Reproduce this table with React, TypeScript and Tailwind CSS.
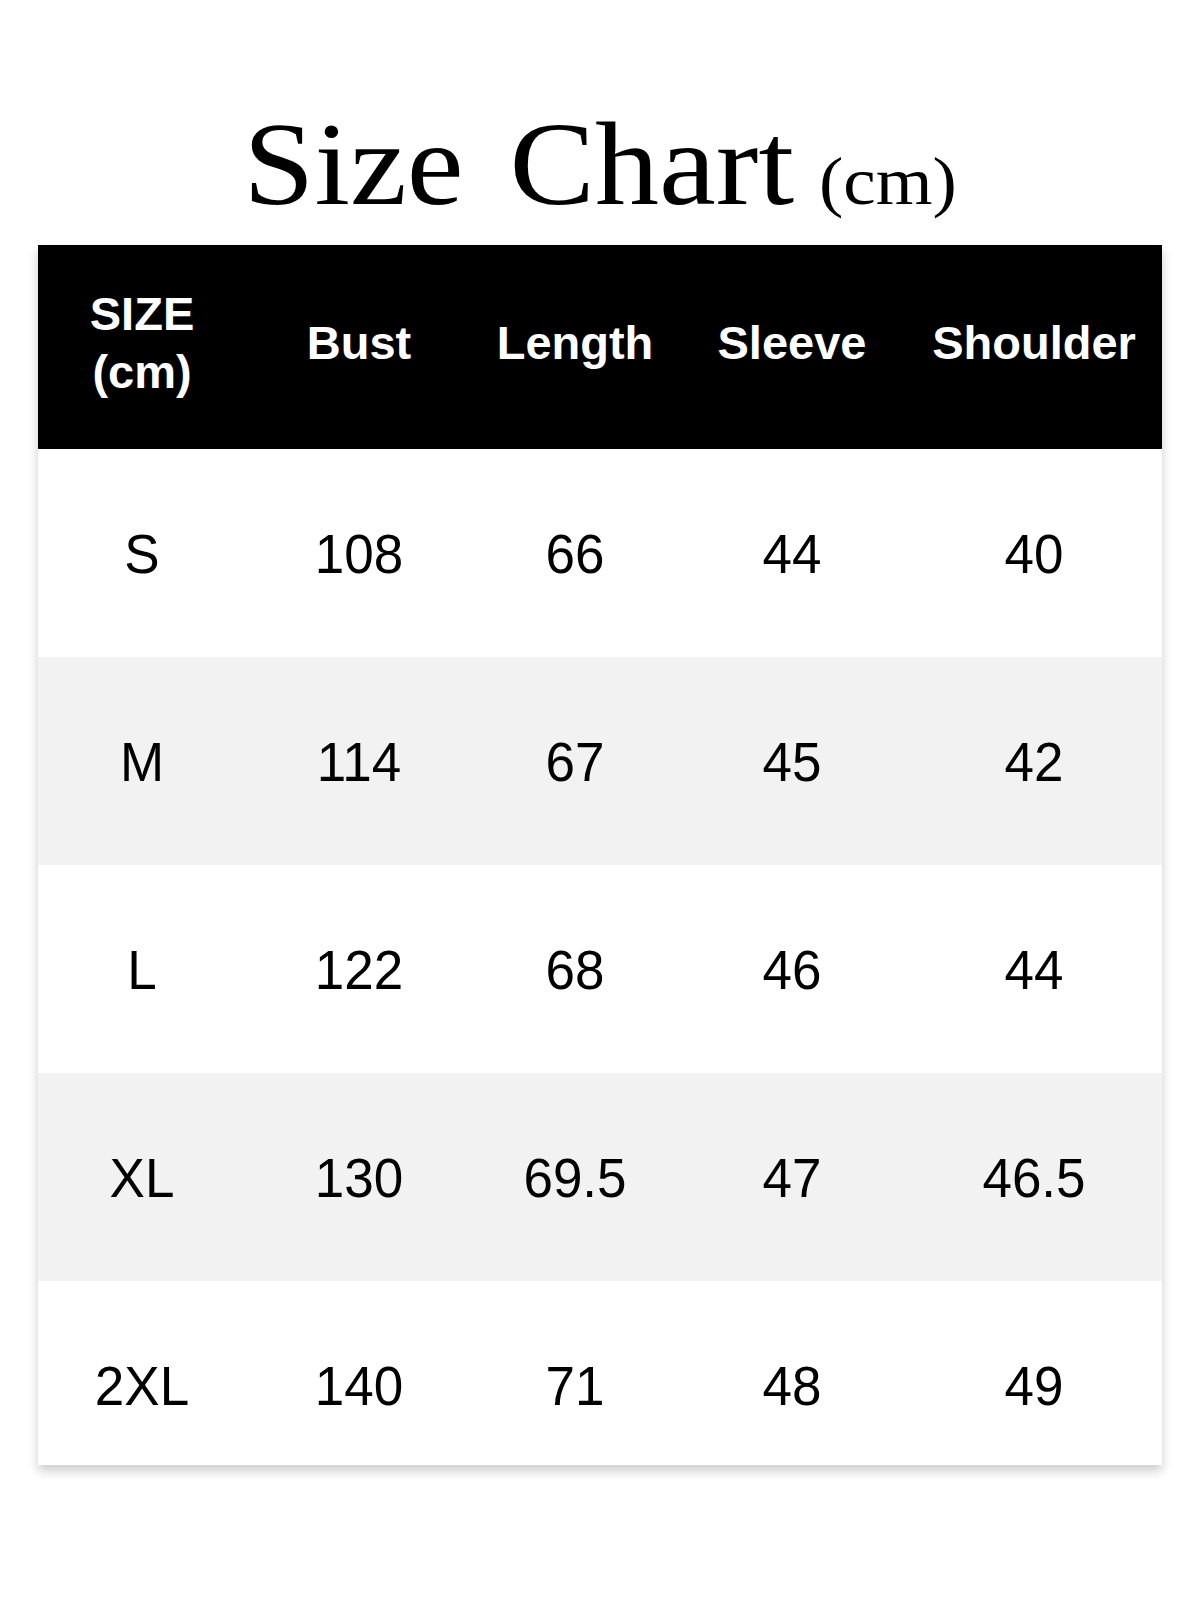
import React from "react";

const rows = [
  ["S", "108", "66", "44", "40"],
  ["M", "114", "67", "45", "42"],
  ["L", "122", "68", "46", "44"],
  ["XL", "130", "69.5", "47", "46.5"],
  ["2XL", "140", "71", "48", "49"],
];

const cols = "grid grid-cols-[208px_226px_206px_228px_1fr]";

export default function App() {
  return (
    <div className="w-[1200px] h-[1600px] bg-white overflow-hidden">
      <div className="h-[245px] pt-[100px] text-center leading-none text-black font-['Liberation_Serif',serif]">
        <span className="inline-block scale-y-[0.93] text-[128px]">
          Size<span className="inline-block w-[46px]"></span>Chart
          <span className="text-[73px] ml-[25px]">(cm)</span>
        </span>
      </div>
      <div className="mx-[38px] shadow-[0_6px_10px_rgba(0,0,0,0.2)] font-['Liberation_Sans',Arial,sans-serif]">
        <div className={`${cols} h-[204px] pb-[8px] bg-black text-white font-bold text-[47px] leading-[58px] items-center text-center`}>
          <div className="flex justify-center">
            <span className="inline-block">
              SIZE
              <br />
              (cm)
            </span>
          </div>
          {["Bust", "Length", "Sleeve", "Shoulder"].map((h) => (
            <div key={h} className="flex justify-center">
              <span className="inline-block">{h}</span>
            </div>
          ))}
        </div>
        {rows.map((r, i) => (
          <div
            key={r[0]}
            className={`${cols} overflow-hidden ${i === 4 ? "h-[184px]" : "h-[208px]"} ${
              i % 2 === 1 ? "bg-[#f2f2f2]" : "bg-white"
            }`}
          >
            {r.map((v, j) => (
              <div key={j} className="h-[208px] flex items-center justify-center text-[53px] leading-none text-black">
                <span className="inline-block scale-y-[1.05]">{v}</span>
              </div>
            ))}
          </div>
        ))}
      </div>
    </div>
  );
}
